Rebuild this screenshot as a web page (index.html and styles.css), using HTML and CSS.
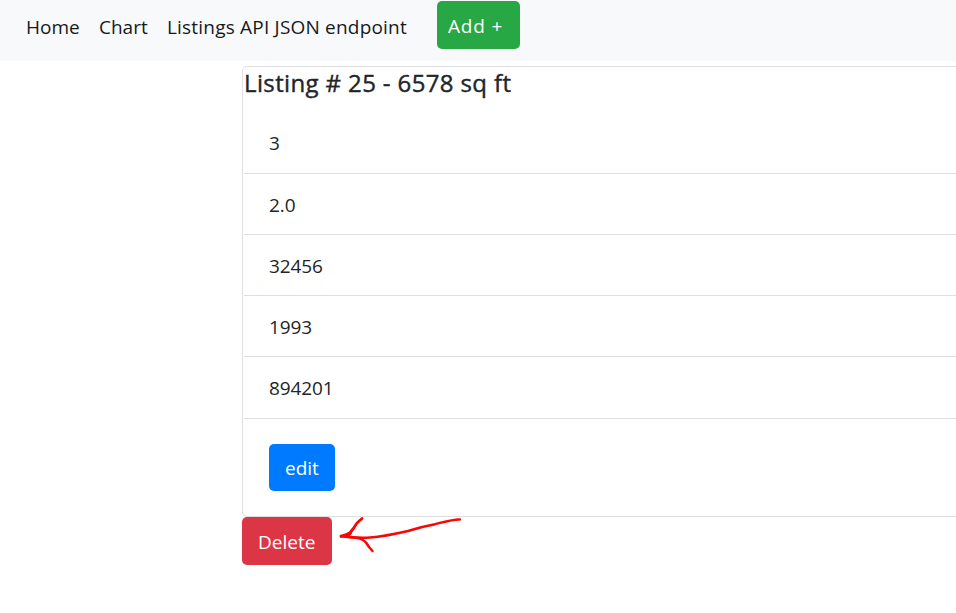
FILE: index.html
```html
<!DOCTYPE html>
<html lang="en">
<head>
<meta charset="utf-8">
<title>Listing</title>
<link rel="stylesheet" href="styles.css">
</head>
<body>
<nav class="navbar">
  <a class="home">Home</a>
  <a class="chart">Chart</a>
  <a class="api">Listings API JSON endpoint</a>
  <a class="btn add">Add +</a>
</nav>
<main class="content">
  <section class="card">
    <h1>Listing # 25 - 6578 sq ft</h1>
    <ul class="list">
      <li>3</li>
      <li>2.0</li>
      <li>32456</li>
      <li>1993</li>
      <li>894201</li>
    </ul>
    <div class="actions"><a class="btn edit">edit</a></div>
  </section>
  <div class="footer">
    <a class="btn delete">Delete</a>
    <svg class="arrow" width="130" height="42" viewBox="335 513 130 42" fill="none" stroke="#fb0505" stroke-linecap="round" stroke-linejoin="round">
      <path stroke-width="2.4" d="M460 519.5C454 519 444 522 435 524.2C425 526 417 528 408 531C395 534 384 536.5 370 537.5C361 538 351 537.5 341 536.2"/>
      <path stroke-width="2.8" d="M341 536C345 535 348 534 350 532.5L354 527.5L357 523L362 518.5"/>
      <path stroke-width="2.4" d="M341 536.5L349 534.5L354 528M348 536L351 533"/>
      <path stroke-width="2.5" d="M350 537C358 537.5 363 539 366 542.5L369 547L372.5 551"/>
    </svg>
  </div>
</main>
</body>
</html>
```
FILE: styles.css
```css
* { box-sizing: border-box; }
body {
  margin: 0;
  background: #fff;
  color: #212529;
  font: 400 19px/30px "Open Sans", "Noto Sans", sans-serif;
  overflow: hidden;
}
.navbar {
  display: flex;
  align-items: flex-start;
  height: 61px;
  padding: 1px 0 0 26px;
  background: #f8f9fb;
  white-space: nowrap;
}
.navbar > a { line-height: 52px; color: #16191c; }
.home { width: 73px; }
.chart { width: 68px; }
.api { width: 270px; letter-spacing: 0.2px; }
.btn {
  display: block;
  height: 48px;
  border-radius: 5px;
  color: #fff;
  line-height: 50px;
  white-space: nowrap;
}
.navbar > .add {
  width: 83px;
  padding-left: 11px;
  background: #28a745;
  color: #fff;
  line-height: 50px;
  letter-spacing: 0.8px;
}
.content { margin: 5px 0 0 242px; }
.card {
  width: 740px;
  height: 451px;
  padding-left: 1px;
  border: 1px solid #dfdfdf;
  border-radius: 5px;
}
h1 {
  margin: 0;
  height: 46px;
  font-size: 24px;
  font-weight: 500;
  line-height: 32px;
  letter-spacing: 0.37px;
  -webkit-text-stroke: 0.4px #212529;
  white-space: nowrap;
}
.list { margin: 0; padding: 0; list-style: none; }
.list li {
  height: 61px;
  padding-left: 25px;
  border-bottom: 1px solid #dfdfdf;
  line-height: 63px;
  letter-spacing: -0.1px;
}
.list li:first-child { line-height: 61px; }
.list li:last-child { height: 62px; }
.actions { padding: 25px 0 0 25px; }
.edit {
  width: 66px;
  height: 47px;
  padding-left: 16px;
  background: #007bff;
  line-height: 48px;
}
.footer { display: flex; align-items: flex-start; gap: 3px; }
.delete {
  width: 90px;
  padding-left: 16px;
  background: #dc3545;
}
.arrow { margin-top: -4px; }
```
